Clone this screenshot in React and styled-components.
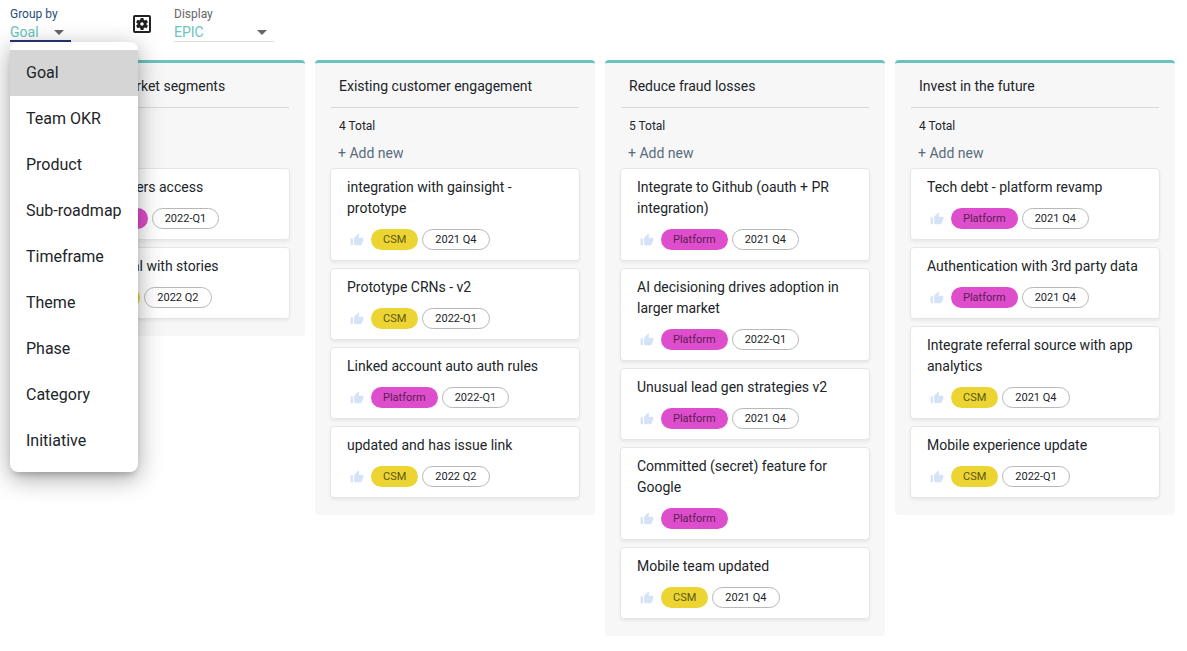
import React, { useState } from 'react'
import styled, { createGlobalStyle } from 'styled-components'
import { MdArrowDropDown, MdOutlineSettingsApplications, MdThumbUp } from 'react-icons/md'


const GlobalStyle = createGlobalStyle`
  * {
    box-sizing: border-box;
  }
  body {
    margin: 0;
    background-color: #fff;
    color: #212529;
    font-family: Roboto, sans-serif;
    font-size: 14px;
  }
  button, select {
    font-family: inherit;
  }
`

const Toolbar = styled.header`
  display: flex;
  align-items: flex-start;
  height: 60px;
  padding: 6px 10px 0;
`

const Field = styled.div`
  position: relative;
  width: ${props => props.$width};
`

const Label = styled.label`
  display: block;
  font-size: 12px;
  line-height: 16px;
  color: ${props => (props.$focused ? '#1f4e79' : '#666')};
`

const SelectBox = styled.div`
  display: grid;
  align-items: center;
  border-bottom: 1px solid ${props => (props.$focused ? '#283479' : '#ddd')};
  box-shadow: ${props => (props.$focused ? 'inset 0 -1px #283479' : 'none')};
  > * {
    grid-area: 1 / 1;
  }
  svg {
    justify-self: end;
    color: #666;
    pointer-events: none;
  }
`

const Select = styled.select`
  appearance: none;
  width: 100%;
  height: 19px;
  padding: 0;
  border: 0;
  outline: 0;
  background: transparent;
  color: #6ac3bd;
  font-size: 14px;
  line-height: 18px;
`

const Caret = styled(MdArrowDropDown)`
  height: 24px;
  margin: -3px 0;
`

const SettingsButton = styled.button`
  display: flex;
  margin: 6px 20px 0 59px;
  padding: 0;
  border: 0;
  background: transparent;
  color: #222;
  cursor: pointer;
`

const Menu = styled.ul`
  position: absolute;
  top: 36px;
  left: 0;
  z-index: 10;
  width: 128px;
  margin: 0;
  padding: 8px 0;
  list-style: none;
  background-color: #fff;
  border-radius: 8px;
  box-shadow: 0 5px 6px -3px rgba(0, 0, 0, .2), 0 6px 24px rgba(0, 0, 0, .36);
`

const MenuItem = styled.li`
  padding: 0 16px;
  font-size: 16px;
  line-height: 46px;
  white-space: nowrap;
  cursor: pointer;
  background-color: ${props => (props.$selected ? '#d5d5d5' : 'transparent')};
`

const Board = styled.main`
  display: flex;
  align-items: flex-start;
  gap: 10px;
  padding: 0 12px 15px 25px;
`

const Column = styled.section`
  flex: 1 1 0;
  min-width: 240px;
  padding: 0 15px 17px;
  background-color: #f7f7f7;
  border-top: 3px solid #6ac3bd;
  border-radius: 4px;
`

const ColumnTitle = styled.h2`
  margin: 0 1px;
  padding: 12px 8px 10px;
  border-bottom: 1px solid #d8d8d8;
  font-size: 14px;
  font-weight: 400;
  line-height: 22px;
`

const Total = styled.div`
  padding: 10px 9px 0;
  font-size: 12px;
  line-height: 16px;
`

const AddButton = styled.button`
  display: block;
  margin-bottom: 4px;
  padding: 8px 8px 0;
  border: 0;
  background: transparent;
  color: #586b7d;
  font-size: 14px;
  line-height: 22px;
  cursor: pointer;
`

const Cards = styled.div`
  display: flex;
  flex-direction: column;
  gap: 7px;
`

const Card = styled.article`
  padding: 8px 16px 10px;
  background-color: #fff;
  border: 1px solid #e4e7ea;
  border-radius: 4px;
  box-shadow: 0 2px 3px rgba(0, 0, 0, .06);
`

const CardTitle = styled.h3`
  margin: 0 0 10px;
  font-size: 14px;
  font-weight: 400;
  line-height: 21px;
`

const CardFooter = styled.div`
  display: flex;
  align-items: center;
  gap: 4px;
`

const Vote = styled.button`
  display: flex;
  width: 20px;
  padding: 1px 3px 0;
  border: 0;
  background: transparent;
  color: #d5e3f8;
  cursor: pointer;
`

const Tag = styled.span`
  height: 21px;
  padding: 1px 12px;
  border-radius: 11px;
  background-color: ${props => props.$color};
  color: ${props => props.$text};
  font-size: 11px;
  line-height: 19px;
  white-space: nowrap;
`

const TimeTag = styled(Tag)`
  padding: 0 12px;
  border: 1px solid #b8b8b8;
  background-color: #fff;
  color: #212529;
`

const groups = ['Goal', 'Team OKR', 'Product', 'Sub-roadmap', 'Timeframe', 'Theme', 'Phase', 'Category', 'Initiative']

const tagColors = {
  Platform: { color: '#de4dcb', text: '#591f52' },
  CSM: { color: '#ecd532', text: '#5e5514' },
  Growth: { color: '#ecd532', text: '#5e5514' },
}

const columns = [
  {
    title: 'Serve new market segments',
    cards: [
      { title: 'Give developers access', tag: 'Platform', time: '2022-Q1' },
      { title: 'Partner portal with stories', tag: 'Growth', time: '2022 Q2' },
    ],
  },
  {
    title: 'Existing customer engagement',
    cards: [
      { title: 'integration with gainsight - prototype', tag: 'CSM', time: '2021 Q4' },
      { title: 'Prototype CRNs - v2', tag: 'CSM', time: '2022-Q1' },
      { title: 'Linked account auto auth rules', tag: 'Platform', time: '2022-Q1' },
      { title: 'updated and has issue link', tag: 'CSM', time: '2022 Q2' },
    ],
  },
  {
    title: 'Reduce fraud losses',
    cards: [
      { title: 'Integrate to Github (oauth + PR integration)', tag: 'Platform', time: '2021 Q4' },
      { title: 'AI decisioning drives adoption in larger market', tag: 'Platform', time: '2022-Q1' },
      { title: 'Unusual lead gen strategies v2', tag: 'Platform', time: '2021 Q4' },
      { title: 'Committed (secret) feature for Google', tag: 'Platform' },
      { title: 'Mobile team updated', tag: 'CSM', time: '2021 Q4' },
    ],
  },
  {
    title: 'Invest in the future',
    cards: [
      { title: 'Tech debt - platform revamp', tag: 'Platform', time: '2021 Q4' },
      { title: 'Authentication with 3rd party data', tag: 'Platform', time: '2021 Q4' },
      { title: 'Integrate referral source with app analytics', tag: 'CSM', time: '2021 Q4' },
      { title: 'Mobile experience update', tag: 'CSM', time: '2022-Q1' },
    ],
  },
]

const FeatureCard = ({ title, tag, time }) => (
  <Card>
    <CardTitle>{title}</CardTitle>
    <CardFooter>
      <Vote aria-label="Vote"><MdThumbUp size={14} /></Vote>
      <Tag $color={tagColors[tag].color} $text={tagColors[tag].text}>{tag}</Tag>
      {time && <TimeTag>{time}</TimeTag>}
    </CardFooter>
  </Card>
)

const App = () => {
  const [group, setGroup] = useState('Goal')

  return (
    <>
      <GlobalStyle />
      <Toolbar>
        <Field $width="61px">
          <Label htmlFor="group" $focused>Group by</Label>
          <SelectBox $focused>
            <Select id="group" value={group} onChange={e => setGroup(e.target.value)}>
              {groups.map(name => <option key={name}>{name}</option>)}
            </Select>
            <Caret size={24} />
          </SelectBox>
          <Menu role="listbox" aria-label="Group by">
            {groups.map(name => (
              <MenuItem
                key={name}
                role="option"
                aria-selected={name === group}
                $selected={name === group}
                onClick={() => setGroup(name)}
              >
                {name}
              </MenuItem>
            ))}
          </Menu>
        </Field>
        <SettingsButton aria-label="Settings"><MdOutlineSettingsApplications size={24} /></SettingsButton>
        <Field $width="100px">
          <Label htmlFor="display">Display</Label>
          <SelectBox>
            <Select id="display" defaultValue="EPIC">
              <option>EPIC</option>
              <option>FEATURE</option>
            </Select>
            <Caret size={24} />
          </SelectBox>
        </Field>
      </Toolbar>
      <Board>
        {columns.map(column => (
          <Column key={column.title}>
            <ColumnTitle>{column.title}</ColumnTitle>
            <Total>{column.cards.length} Total</Total>
            <AddButton>+ Add new</AddButton>
            <Cards>
              {column.cards.map(card => <FeatureCard key={card.title} {...card} />)}
            </Cards>
          </Column>
        ))}
      </Board>
    </>
  )
}

export default App
